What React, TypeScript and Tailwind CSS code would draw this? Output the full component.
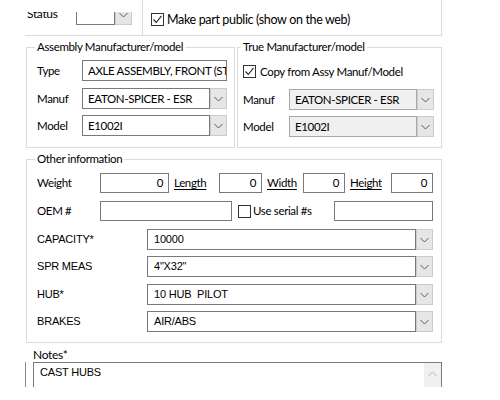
import React from "react";

const SEG = "font-['Lato',sans-serif] tracking-[-0.35px]";
const SZ = "text-[11.5px]";
const TAH = "font-['Liberation_Sans',Arial,sans-serif] text-[11px] tracking-[-0.2px]";

function Chevron({ up = false }: { up?: boolean }) {
  return (
    <svg width="9" height="6" viewBox="0 0 9 6" className="block">
      <path
        d={up ? "M0.5 5 L4.5 1 L8.5 5" : "M0.5 1 L4.5 5 L8.5 1"}
        fill="none"
        stroke={up ? "#b5b5b5" : "#5a5a5a"}
        strokeWidth="1"
      />
    </svg>
  );
}

function CheckBox({ checked }: { checked: boolean }) {
  return (
    <div className="w-[13px] h-[13px] border border-[#333333] bg-white flex items-center justify-center shrink-0">
      {checked && (
        <svg width="11" height="11" viewBox="0 0 11 11" className="block">
          <path d="M1.5 5.5 L4.3 8.5 L9.5 1.8" fill="none" stroke="#222" strokeWidth="1.1" />
        </svg>
      )}
    </div>
  );
}

function Combo({
  value,
  w,
  disabled = false,
  font = `${SEG} ${SZ}`,
  pl = "pl-[5px]",
}: {
  value: string;
  w: string;
  disabled?: boolean;
  font?: string;
  pl?: string;
}) {
  return (
    <div className={`flex h-[21px] ${w} shrink-0`}>
      <div
        className={`flex-1 flex items-center border ${
          disabled ? "border-[#a8a8a8] bg-[#f0f0f0]" : "border-[#7a7a7a] bg-white"
        } ${pl} leading-none ${font} overflow-hidden whitespace-pre`}
      >
        {value}
      </div>
      <div className="w-[17px] h-full border border-[#cccccc] bg-[#e6e6e6] flex items-center justify-center">
        <Chevron />
      </div>
    </div>
  );
}

function TextBox({ value = "", w, right = false }: { value?: string; w: string; right?: boolean }) {
  return (
    <div
      className={`h-[20px] ${w} shrink-0 border border-[#7a7a7a] bg-white flex items-center ${
        right ? "justify-end pr-[5px]" : "pl-[4px]"
      } ${SZ} leading-none ${SEG}`}
    >
      {value}
    </div>
  );
}

function LinkLabel({ text, w }: { text: string; w: string }) {
  return (
    <div className={`${w} shrink-0 pl-[5px] ${SZ} ${SEG} underline underline-offset-2`}>{text}</div>
  );
}

export default function App() {
  return (
    <div className="w-[500px] h-[400px] bg-white overflow-hidden text-black relative">
      <div className="ml-[25px] w-[417px] flex flex-col">
        {/* top box */}
        <div className="flex h-[36px] border-b border-r border-[#dcdcdc]">
          <div className="w-[118px] border-r border-[#dcdcdc] shrink-0">
            <div className="mt-[12px] h-[14px] overflow-hidden">
              <div className="-mt-[8px] flex items-center h-[21px]">
                <div className={`w-[51px] pl-[2px] text-[12px] ${SEG} -translate-y-[1px]`}>Status</div>
                <Combo value="" w="w-[56px]" />
              </div>
            </div>
          </div>
          <div className="flex items-start pl-[8px] pt-[13px]">
            <CheckBox checked />
            <div className={`ml-[3px] text-[12.5px] leading-[13px] ${SEG}`}>Make part public (show on the web)</div>
          </div>
        </div>

        {/* manufacturer boxes */}
        <div className="flex mt-[3px] ml-[1px]">
          <fieldset className="w-[209px] h-[109px] border border-[#dcdcdc] pl-[10px] pr-[7px] shrink-0">
            <legend className={`-ml-[2px] px-[2px] ${SZ} leading-[16px] ${SEG}`}>
              Assembly Manufacturer/model
            </legend>
            <div className="flex items-center mt-[5px] h-[21px]">
              <div className={`w-[45px] ${SZ} ${SEG}`}>Type</div>
              <div
                className={`w-[145px] h-[21px] border border-[#7a7a7a] flex items-center pl-[5px] ${SZ} whitespace-nowrap overflow-hidden ${SEG}`}
              >
                AXLE ASSEMBLY, FRONT (STEER)
              </div>
            </div>
            <div className="flex items-center mt-[7px]">
              <div className={`w-[45px] ${SZ} ${SEG}`}>Manuf</div>
              <Combo value="EATON-SPICER - ESR" w="w-[145px]" />
            </div>
            <div className="flex items-center mt-[6px]">
              <div className={`w-[45px] ${SZ} ${SEG}`}>Model</div>
              <Combo value="E1002I" w="w-[145px]" />
            </div>
          </fieldset>
          <fieldset className="ml-[2px] w-[205px] h-[109px] border border-[#dcdcdc] pl-[5px] pr-[7px] shrink-0">
            <legend className={`-ml-[2px] px-[2px] ${SZ} leading-[16px] ${SEG}`}>True Manufacturer/model</legend>
            <div className="flex items-center mt-[10px] h-[13px]">
              <CheckBox checked />
              <div className={`ml-[4px] ${SZ} ${SEG}`}>Copy from Assy Manuf/Model</div>
            </div>
            <div className="flex items-center mt-[11px]">
              <div className={`w-[46px] ${SZ} ${SEG}`}>Manuf</div>
              <Combo value="EATON-SPICER - ESR" w="w-[145px]" disabled />
            </div>
            <div className="flex items-center mt-[6px]">
              <div className={`w-[46px] ${SZ} ${SEG}`}>Model</div>
              <Combo value="E1002I" w="w-[145px]" disabled />
            </div>
          </fieldset>
        </div>

        {/* other information */}
        <fieldset className="mt-[3px] ml-[1px] w-[416px] h-[192px] border border-[#dcdcdc] pl-[10px] pr-[8px]">
          <legend className={`-ml-[2px] px-[2px] ${SZ} leading-[16px] ${SEG}`}>Other information</legend>
          <div className="flex items-center mt-[6px] h-[20px]">
            <div className={`w-[63px] ${SZ} ${SEG}`}>Weight</div>
            <TextBox value="0" w="w-[69px]" right />
            <LinkLabel text="Length" w="w-[50px]" />
            <TextBox value="0" w="w-[43px]" right />
            <LinkLabel text="Width" w="w-[41px]" />
            <TextBox value="0" w="w-[42px]" right />
            <LinkLabel text="Height" w="w-[46px]" />
            <TextBox value="0" w="w-[42px]" right />
          </div>
          <div className="flex items-center mt-[8px] h-[20px]">
            <div className={`w-[63px] ${SZ} ${SEG}`}>OEM #</div>
            <TextBox w="w-[132px]" />
            <div className="ml-[6px] flex items-center w-[96px]">
              <CheckBox checked={false} />
              <div className={`ml-[2px] ${SZ} ${SEG}`}>Use serial #s</div>
            </div>
            <TextBox w="w-[99px]" />
          </div>
          <div className="flex items-center mt-[8px]">
            <div className={`w-[110px] ${TAH}`}>CAPACITY*</div>
            <Combo value="10000" w="w-[286px]" font={TAH} pl="pl-[6px]" />
          </div>
          <div className="flex items-center mt-[6px]">
            <div className={`w-[110px] ${TAH}`}>SPR MEAS</div>
            <Combo value={'4"X32"'} w="w-[286px]" font={TAH} pl="pl-[6px]" />
          </div>
          <div className="flex items-center mt-[7px]">
            <div className={`w-[110px] ${TAH}`}>HUB*</div>
            <Combo value="10 HUB  PILOT" w="w-[286px]" font={TAH} pl="pl-[6px]" />
          </div>
          <div className="flex items-center mt-[6px]">
            <div className={`w-[110px] ${TAH}`}>BRAKES</div>
            <Combo value="AIR/ABS" w="w-[286px]" font={TAH} pl="pl-[6px]" />
          </div>
        </fieldset>

        {/* notes */}
        <div className="flex flex-col">
          <div className={`ml-[8px] mt-[5px] h-[14px] leading-[14px] text-[12px] ${SEG}`}>Notes*</div>
          <div className="flex h-[25px] overflow-hidden border-l border-[#8a8a8a]">
            <div className="ml-[7px] w-[410px] h-[40px] border border-[#7a7a7a] flex">
              <div className={`flex-1 pl-[6px] pt-[2px] leading-[14px] ${TAH}`}>CAST HUBS</div>
              <div className="w-[17px] bg-[#f0f0f0] flex justify-center pt-[8px]">
                <Chevron up />
              </div>
            </div>
          </div>
        </div>
      </div>
    </div>
  );
}
